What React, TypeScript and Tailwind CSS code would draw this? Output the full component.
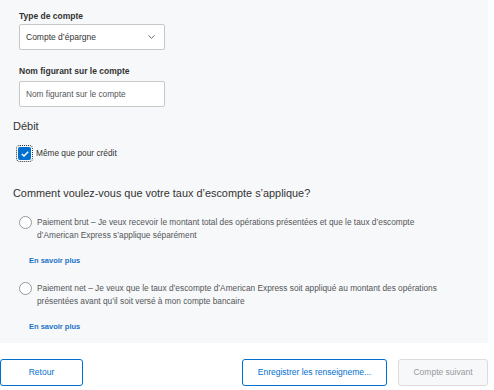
import React, { useState } from 'react';

const font = { fontFamily: '"Liberation Sans", Arial, sans-serif' };

const Radio: React.FC<{ checked?: boolean; onClick: () => void }> = ({ checked, onClick }) => (
  <button
    onClick={onClick}
    className="mt-[0.5px] flex h-[13px] w-[13px] shrink-0 items-center justify-center rounded-full border border-[#97999b] bg-white"
  >
    {checked && <span className="h-[7px] w-[7px] rounded-full bg-[#006fcf]" />}
  </button>
);

export default function App() {
  const [sameAsCredit, setSameAsCredit] = useState(true);
  const [mode, setMode] = useState<string | null>(null);

  const options = [
    {
      id: 'brut',
      text: 'Paiement brut – Je veux recevoir le montant total des opérations présentées et que le taux d’escompte d’American Express s’applique séparément',
    },
    {
      id: 'net',
      text: 'Paiement net – Je veux que le taux d’escompte d’American Express soit appliqué au montant des opérations présentées avant qu’il soit versé à mon compte bancaire',
    },
  ];

  return (
    <div className="h-[390px] w-[494px] overflow-hidden bg-white" style={font}>
      <div className="flex h-[343px] w-[488px] flex-col bg-[#f7f8f9] pt-[10px]">
        <label className="ml-[19px] text-[8.5px] font-bold leading-[12px] text-[#333]">Type de compte</label>
        <div className="ml-[19px] mt-[2px] flex h-[26px] w-[146px] items-center justify-between rounded-[2px] border border-[#c8c9c7] bg-white pl-[6px] pr-[9px]">
          <span className="text-[8.5px] text-[#333]">Compte d’épargne</span>
          <svg width="7" height="4" viewBox="0 0 7 4" fill="none">
            <path d="M0.5 0.5L3.5 3.3L6.5 0.5" stroke="#6b6e71" strokeWidth="1" />
          </svg>
        </div>

        <label className="ml-[19px] mt-[15px] text-[8.5px] font-bold leading-[12px] text-[#333]">
          Nom figurant sur le compte
        </label>
        <input
          placeholder="Nom figurant sur le compte"
          className="ml-[19px] mt-[4px] h-[26px] w-[146px] rounded-[2px] border border-[#c8c9c7] bg-white px-[6px] text-[8.3px] text-[#333] outline-none placeholder:text-[#53565a]"
        />

        <div className="ml-[13px] mt-[12px] text-[11px] leading-[14px] text-[#333]">Débit</div>

        <div className="ml-[18px] mt-[14px] flex items-center gap-[5px]">
          <button
            onClick={() => setSameAsCredit(!sameAsCredit)}
            className={`flex h-[13px] w-[13px] items-center justify-center rounded-[2px] outline-1 outline-offset-[1px] outline-dotted outline-[#333] ${sameAsCredit ? 'bg-[#006fcf]' : 'border border-[#97999b] bg-white'}`}
          >
            {sameAsCredit && (
              <svg width="8" height="6" viewBox="0 0 8 6" fill="none">
                <path d="M0.8 3L3 5L7.2 0.8" stroke="white" strokeWidth="1.4" />
              </svg>
            )}
          </button>
          <span className="text-[8.3px] leading-[13px] text-[#333]">Même que pour crédit</span>
        </div>

        <div className="ml-[13px] mt-[26px] text-[10.9px] leading-[14px] text-[#333]">
          Comment voulez-vous que votre taux d’escompte s’applique?
        </div>

        {options.map((o, i) => (
          <div key={o.id} className={i === 0 ? 'mt-[15.5px]' : 'mt-[14.5px]'}>
            <div className="ml-[19px] flex items-start gap-[5px]">
              <Radio checked={mode === o.id} onClick={() => setMode(o.id)} />
              <p className="w-[412px] text-[8.3px] leading-[13px] text-[#53565a]">{o.text}</p>
            </div>
            <a href="#" className="ml-[29px] mt-[13.5px] block text-[7.5px] font-bold leading-[12px] text-[#1a73c9]">
              En savoir plus
            </a>
          </div>
        ))}
      </div>

      <div className="mt-[16px] flex w-[488px] items-center">
        <button className="h-[27px] w-[83px] rounded-[3px] border border-[#006fcf] bg-white text-[8.5px] text-[#006fcf]">
          Retour
        </button>
        <button className="ml-auto h-[27px] w-[145px] rounded-[3px] border border-[#006fcf] bg-white text-[8.5px] text-[#006fcf]">
          Enregistrer les renseigneme...
        </button>
        <button className="ml-[11px] h-[27px] w-[90px] rounded-[3px] border border-[#dcdcdc] bg-[#f7f8f9] text-[8.5px] text-[#97999b]">
          Compte suivant
        </button>
      </div>
    </div>
  );
}
